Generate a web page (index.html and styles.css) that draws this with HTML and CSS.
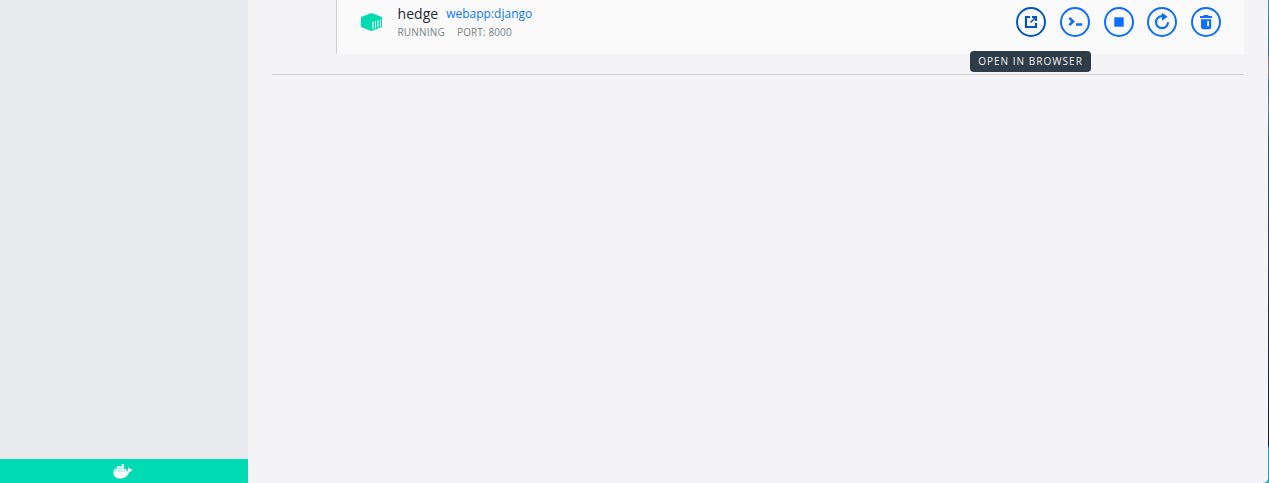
FILE: index.html
```
<!DOCTYPE html>
<html lang="en">
<head>
<meta charset="utf-8">
<title>Dashboard</title>
<link rel="stylesheet" href="styles.css">
</head>
<body>
<div class="window">
  <aside class="sidebar">
    <footer class="status">
      <svg class="whale" viewBox="0 0 21 16" fill="#fff"><path d="M0 7.700h14.400c1 0 1.500-.4 1.700-1-.5-1-.3-2.300.4-3.200.9.600 1.300 1.200 1.400 2.100.9-.1 1.900 0 2.700.5-.5 1.200-1.600 1.900-3 1.900C15.800 12.900 12.300 15.500 7.300 15.500 2.800 15.500 0 12.800 0 7.700z"/><path d="M1.300 5h2.300v2.400H1.300zM3.900 5h2.300v2.400H3.900zM6.500 5h2.300v2.400H6.500zM9.100 5h2.300v2.400H9.100zM11.700 5H14v2.400h-2.300zM3.900 2.500h2.300v2.200H3.900zM6.500 2.500h2.300v2.200H6.500zM9.100 2.500h2.300v2.200H9.100zM9.100 0h2.300v2.200H9.100z"/></svg>
    </footer>
  </aside>
  <main class="content">
    <section class="group">
      <article class="container-row">
        <svg class="box" viewBox="0 0 22 18"><path fill="#00dbb3" d="M11.500 0L22 4v10l-10.500 4L1 14V4z"/><path stroke="#fafafa" stroke-width="1.100" d="M12.900 8.500V16M15.500 7.900v7.300M18.100 7.200v7.100M20.500 6.400v7.100"/></svg>
        <div class="info">
          <div class="title"><span class="name">hedge</span><a class="image">webapp:django</a></div>
          <div class="meta"><span class="state">RUNNING</span><span class="port">PORT: 8000</span></div>
        </div>
        <div class="actions">
          <button class="action active" aria-label="Open in browser"><svg viewBox="0 0 30 30"><path d="M14 10H10v10h10v-4M16 10h4v4" fill="none" stroke="currentColor" stroke-width="2.200"/><path d="M20 10l-5.500 5.500" stroke="currentColor" stroke-width="1.600"/></svg><span class="tooltip">OPEN IN BROWSER</span></button>
          <button class="action" aria-label="CLI"><svg viewBox="0 0 30 30"><path d="M9.300 10.800l3.800 3.700-3.800 3.700M16 17.400h6.200" fill="none" stroke="currentColor" stroke-width="2.500"/></svg></button>
          <button class="action" aria-label="Stop"><svg viewBox="0 0 30 30"><path d="M10.300 10.300h9.400v9.400h-9.400z" fill="currentColor"/></svg></button>
          <button class="action" aria-label="Restart"><svg viewBox="0 0 30 30"><path d="M15 9.200a6 6 0 1 0 6 6" fill="none" stroke="currentColor" stroke-width="2.200"/><path d="M15 5.800l5.600 4-5.600 4z" fill="currentColor"/></svg></button>
          <button class="action" aria-label="Delete"><svg viewBox="0 0 30 30"><path d="M9 9h3.600V8h4.800v1H21v2.100H9zM10 12.200h10.200V20q0 2.200-2 2.200H12q-2 0-2-2.200z" fill="currentColor"/><path d="M16.200 14H18v5.300h-1.800z" fill="#fafafa"/></svg></button>
        </div>
      </article>
    </section>
  </main>
</div>
</body>
</html>
```
FILE: styles.css
```
* { box-sizing: border-box; }
body {
  margin: 0;
  height: 483px;
  overflow: hidden;
  padding-right: 1px;
  background: linear-gradient(#4887a0 0, #406f83 52px, #777b80 62px, #888b90 72px, #526979 84px, #677c89 110px, #405968 135px, #30485a 230px, #172e3e 360px, #10222f 446px, #399cbc 448px, #399cbc 100%);
  font-family: "Open Sans", sans-serif;
}
.window {
  display: flex;
  height: 483px;
  background: #f4f4f6;
  border-bottom-right-radius: 5px;
  overflow: hidden;
}
.sidebar {
  flex: none;
  width: 248px;
  display: flex;
  flex-direction: column;
  justify-content: flex-end;
  background: #e9eaee;
}
.status {
  display: flex;
  justify-content: center;
  align-items: center;
  height: 24px;
  background: #00dbb3;
}
.whale { width: 20px; height: 15px; margin-left: -2px; }
.content { flex: 1; padding: 0 24px; }
.group {
  height: 75px;
  padding-left: 64px;
  border-bottom: 1px solid #d2d4d7;
}
.container-row {
  display: flex;
  align-items: flex-start;
  height: 54px;
  padding: 0 23px 0 24px;
  background: #fafafa;
  border-left: 1px solid #ced0d3;
}
.box { width: 22px; height: 18px; margin: 13px 14px 0 -1px; }
.info { flex: 1; padding: 4px 0 0 1.500px; }
.title { display: flex; gap: 8px; height: 22px; line-height: 20px; }
.name { font-size: 14px; letter-spacing: 0.05px; color: #222b31; }
.image { font-size: 12px; color: #0877ff; }
.meta { display: flex; gap: 12px; font-size: 10px; line-height: 13px; letter-spacing: 0.2px; color: #777f84; }
.port { letter-spacing: 0.12px; }
.actions { display: flex; gap: 13.750px; margin-top: 7px; }
.action {
  position: relative;
  width: 30px;
  height: 30px;
  padding: 0;
  border: 0;
  background: none;
  color: #0d6efd;
}
.action::before {
  content: "";
  position: absolute;
  inset: 0;
  border: 2px solid currentColor;
  border-radius: 50%;
}
.action svg { display: block; width: 30px; height: 30px; }
.active { color: #0754bd; }
.tooltip {
  position: absolute;
  top: 44px;
  left: -46px;
  width: 121px;
  height: 21px;
  border-radius: 4px;
  background: #2d3c46;
  color: #f3f5f6;
  font: 10px/21px "Open Sans", sans-serif;
  letter-spacing: 1.030px;
  text-align: center;
  white-space: nowrap;
}
```
